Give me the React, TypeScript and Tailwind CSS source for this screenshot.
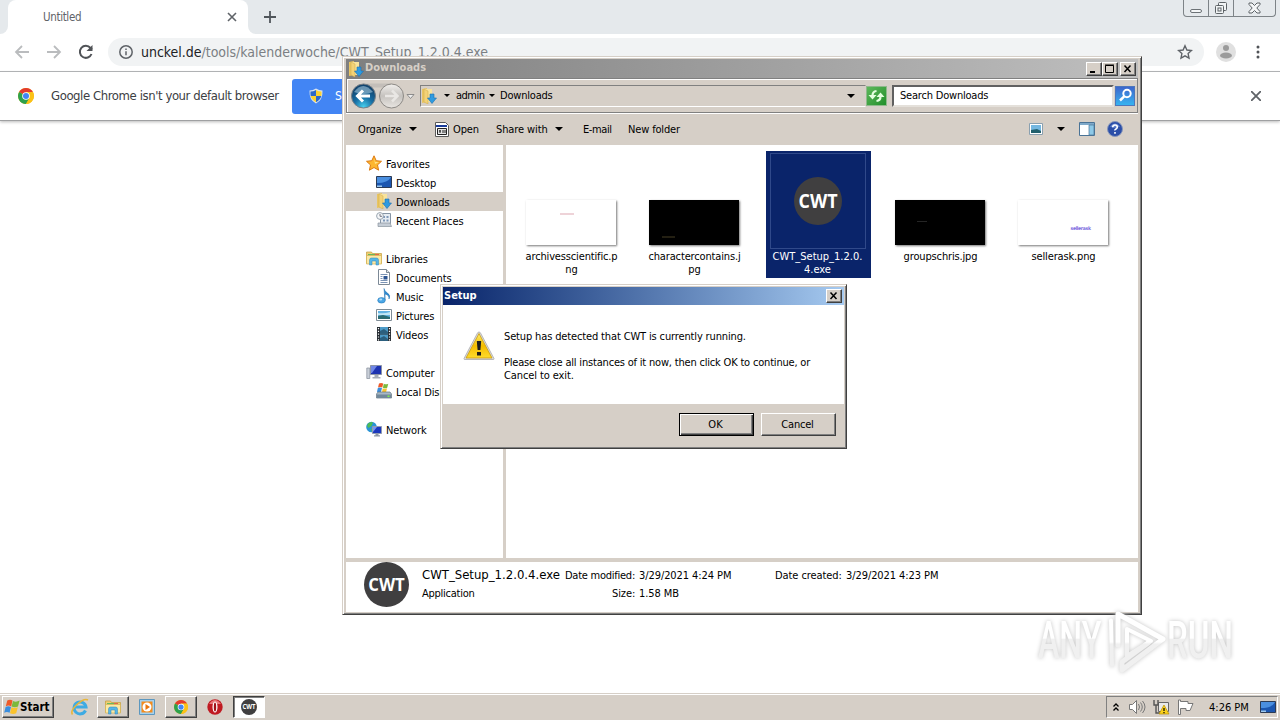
import type { ReactNode } from 'react';

const raised =
  'bg-[#d6cfc7] border border-t-white border-l-white border-r-[#404040] border-b-[#404040] shadow-[inset_-1px_-1px_0_#808080]';

function Caret() {
  return (
    <svg width="8" height="4" viewBox="0 0 8 4" className="shrink-0">
      <path d="M0 0h8L4 4z" fill="#000" />
    </svg>
  );
}

function ChromeLogo({ size = 16 }: { size?: number }) {
  return (
    <svg width={size} height={size} viewBox="0 0 16 16" className="shrink-0">
      <circle cx="8" cy="8" r="8" fill="#fbc116" />
      <path d="M8 8L1.1 4A8 8 0 0 1 14.9 4H8z" fill="#e33b2e" />
      <path d="M8 8L1.1 4A8 8 0 0 0 8 16l3.5-6z" fill="#2da14c" />
      <path d="M8 4.2h7A8 8 0 0 1 8 16l3.4-6z" fill="#fbc116" />
      <circle cx="8" cy="8" r="3.8" fill="#fff" />
      <circle cx="8" cy="8" r="3" fill="#4285f4" />
    </svg>
  );
}

function CwtLogo({ size }: { size: number }) {
  return (
    <svg width={size} height={size} viewBox="0 0 48 48" className="shrink-0">
      <circle cx="24" cy="24" r="24" fill="#403f40" />
      <text
        x="24"
        y="31"
        textAnchor="middle"
        fontFamily="Open Sans, sans-serif"
        fontWeight="700"
        fontSize="19.5"
        textLength="39"
        lengthAdjust="spacingAndGlyphs"
        fill="#fff"
      >
        CWT
      </text>
    </svg>
  );
}

function DownloadsIcon({ size = 16 }: { size?: number }) {
  return (
    <svg width={size} height={size} viewBox="0 0 16 16" className="shrink-0">
      <path d="M1 1l5-1v14l-5 1z" fill="#e9c562" />
      <path d="M3 1h8v13H3z" fill="#f8e39c" />
      <path d="M3 1l4 2v13l-4-2z" fill="#f3d277" stroke="#cfa94a" strokeWidth=".5" />
      <path d="M9 6h4v4h2.500l-4.500 5.500L6.500 10H9z" fill="#2f9be0" stroke="#1b6fb0" strokeWidth=".6" />
    </svg>
  );
}

function MonitorIcon() {
  return (
    <svg width="16" height="16" viewBox="0 0 16 16" className="shrink-0">
      <path d="M.5 2.500h15v11H.5z" fill="#1b56b0" stroke="#2c3b55" />
      <path d="M1 3h14q-3 6-14 6z" fill="#4a8fe0" />
      <path d="M1 11.500h5V13H1z" fill="#9cc8ef" />
    </svg>
  );
}

function FolderIcon({ size = 16 }: { size?: number }) {
  return (
    <svg width={size} height={size} viewBox="0 0 16 16" className="shrink-0">
      <path d="M.5 2h5l1 1.500h9V13H.5z" fill="#efd074" stroke="#c39b3c" strokeWidth=".7" />
      <path d="M2 4h7v1.200H2z" fill="#69b85d" />
      <path d="M9 4h4v1.200H9z" fill="#e4664a" />
      <path d="M.5 5.500h15V14H.5z" fill="#fbe9a6" stroke="#d3b050" strokeWidth=".7" />
      <path d="M3.500 15V10q0-2 2-2h5q2 0 2 2v5h-2.500v-4h-4v4z" fill="#56b5e6" stroke="#2e86bd" strokeWidth=".5" />
    </svg>
  );
}

function PictureIcon() {
  return (
    <svg width="16" height="16" viewBox="0 0 16 16" className="shrink-0">
      <path d="M.5 2.500h15v11H.5z" fill="#fff" stroke="#7e8c96" />
      <path d="M2 4h12v8H2z" fill="#64b4e4" />
      <path d="M2 6q6 1 12-1v3H2z" fill="#c2e7f5" />
      <path d="M2 9l5-1 7 2v2H2z" fill="#2a6c72" />
    </svg>
  );
}

function StarIcon() {
  return (
    <svg width="16" height="16" viewBox="0 0 16 16" className="shrink-0">
      <path d="M8 .8l2.200 4.900 5.300.6-4 3.600 1.100 5.300L8 12.500l-4.600 2.700 1.100-5.300-4-3.600 5.300-.6z" fill="#fdb62f" stroke="#dd7a12" />
      <path d="M8 3l1.200 4H13L9 9z" fill="#ffe289" />
    </svg>
  );
}

function RecentIcon() {
  return (
    <svg width="16" height="16" viewBox="0 0 16 16" className="shrink-0">
      <path d="M4.500 1.500h10v10h-10z" fill="#e7edf3" stroke="#8695a5" />
      <path d="M7 4h2v2H7zM10.500 4h2v2h-2zM7 7.500h2v2H7zM10.500 7.500h2v2h-2z" fill="#7f98b8" />
      <path d="M2 11h12l1.500 3.500H2z" fill="#c5cdd6" stroke="#8a949e" strokeWidth=".7" />
      <circle cx="4" cy="4" r="3.400" fill="#f5f7f9" stroke="#9aa5b0" />
      <path d="M4 2v2.300h2" fill="none" stroke="#556" strokeWidth=".8" />
    </svg>
  );
}

function DocIcon() {
  return (
    <svg width="16" height="16" viewBox="0 0 16 16" className="shrink-0">
      <path d="M2.500.5h8l3 3v12h-11z" fill="#fff" stroke="#7c8996" />
      <path d="M10.500.5v3h3" fill="#dfe6ec" stroke="#7c8996" />
      <path d="M4.500 5.500h7M4.500 7.500h2M4.500 9.500h2M4.500 11.500h7M4.500 13.500h7" stroke="#7a93b5" />
      <path d="M7.500 7h4v3.500h-4z" fill="#2c5592" />
    </svg>
  );
}

function MusicIcon() {
  return (
    <svg width="16" height="16" viewBox="0 0 16 16" className="shrink-0">
      <path d="M8 .5q.5 3 3.500 4.500 3.500 2.500 1.500 6 .5-4-4-5v6z" fill="#2d8bd3" stroke="#1e6eae" strokeWidth=".5" />
      <ellipse cx="5.500" cy="12.300" rx="3.800" ry="2.800" fill="#4aa7e6" stroke="#1e6eae" strokeWidth=".5" />
      <ellipse cx="4.700" cy="11.500" rx="1.500" ry="1" fill="#b5defa" />
    </svg>
  );
}

function VideoIcon() {
  return (
    <svg width="16" height="16" viewBox="0 0 16 16" className="shrink-0">
      <path d="M1 1h14v14H1z" fill="#262d33" />
      <path d="M4 1h8v6.500H4zM4 8.500h8V15H4z" fill="#4d9bc8" />
      <path d="M4 5l4-2 4 3v1.500H4zM4 12l4-2 4 3v2H4z" fill="#2b5f7e" />
      <path d="M2.500 2v13M13.500 2v13" stroke="#fff" strokeWidth="1.200" strokeDasharray="1.200 1.600" />
    </svg>
  );
}

function ComputerIcon() {
  return (
    <svg width="16" height="16" viewBox="0 0 16 16" className="shrink-0">
      <path d="M.8 4h3v10.500h-3z" fill="#c9cfd8" stroke="#848d99" strokeWidth=".7" />
      <path d="M4.500 1.500h11v9h-11z" fill="#1d33b0" stroke="#8b93a6" />
      <path d="M5 2h6L6 9H5z" fill="#6f86e6" />
      <path d="M8.500 11h4v2h2v1.500h-8V13h2z" fill="#a6adb8" />
    </svg>
  );
}

function WinFlag({ size = 16 }: { size?: number }) {
  return (
    <svg width={size} height={size} viewBox="0 0 16 16" className="shrink-0">
      <path d="M3.300 1.500q2.700-1.600 5.200 0L7.200 7.400Q4.500 5.800 1.800 7.300z" fill="#ef5a28" />
      <path d="M9 1.900q2.900 1.600 6.600-.3L14 7.600q-3.200 1.500-6.400 0z" fill="#7cb93c" />
      <path d="M1.600 7.900q2.700-1.500 5.400 0L5.600 13.700q-2.700-1.500-5.400 0z" fill="#3b8ede" />
      <path d="M7.500 8.200q3 1.500 6.300 0l-1.600 6q-3 1.500-6.200 0z" fill="#fbc32c" />
    </svg>
  );
}

function DiskIcon() {
  return (
    <svg width="16" height="16" viewBox="0 0 16 16" className="shrink-0">
      <path d="M3 .5q2-1 4.200 0L6.300 4.500q-2-1-4.300 0z" fill="#ef5a28" />
      <path d="M7.800.8q2 1 4.500 0L11.200 4.800q-2 1-4.300 0z" fill="#7cb93c" />
      <path d="M1.800 5q2-1 4.200 0L5 9H1z" fill="#3b8ede" />
      <path d="M6.700 5.300q2 1 4.300 0L10 9.500H6z" fill="#fbc32c" />
      <path d="M2 9h12l1.500 2v4H.5v-4z" fill="#a8b8c4" stroke="#63727e" strokeWidth=".7" />
      <path d="M1 11.500h14V15H1z" fill="#71889a" />
      <path d="M11.500 12.500h2v1.500h-2z" fill="#7cf04c" />
    </svg>
  );
}

function NetworkIcon() {
  return (
    <svg width="16" height="16" viewBox="0 0 16 16" className="shrink-0">
      <circle cx="5.500" cy="6" r="5.300" fill="#2a94d6" />
      <path d="M2 2.500Q5 0 7 1.500L5.500 5 2.500 7 1 5zM5 8l3-1 1 3-3 1z" fill="#4dbb55" />
      <path d="M6.500 5.500h9v7h-9z" fill="#1b37bd" stroke="#909bb0" />
      <path d="M7 6h4l-4 5z" fill="#7895ef" />
      <path d="M9.500 13h3v1.200h1.500V15.500H8v-1.300h1.500z" fill="#8d97a5" />
    </svg>
  );
}

function Shield() {
  return (
    <svg width="14" height="16" viewBox="0 0 14 16" className="shrink-0">
      <path d="M7 .5q3 2 6.500 2Q14 12 7 15.500 0 12 .5 2.500 4 2.500 7 .5z" fill="#d9e4ef" />
      <path d="M7 2v6H1.700Q1.300 6 1.500 3.600 4.500 3.500 7 2z" fill="#2c68c9" />
      <path d="M7 2v6h5.300q.4-2 .2-4.400Q9.500 3.500 7 2z" fill="#fbd232" />
      <path d="M7 8v6.300Q2.700 12 1.700 8z" fill="#fbd232" />
      <path d="M7 8v6.300Q11.300 12 12.300 8z" fill="#2c68c9" />
    </svg>
  );
}

function CaptionButton({ children, label }: { children: ReactNode; label: string }) {
  return (
    <button aria-label={label} className={`flex h-[14px] w-4 items-center justify-center ${raised}`}>
      <svg width="10" height="10" viewBox="0 0 10 10" fill="none" stroke="#000">
        {children}
      </svg>
    </button>
  );
}

function Browser() {
  return (
    <div className="flex h-[693px] flex-col">
      <div className="flex h-[34px] shrink-0 bg-[#e5e9ec]">
        <div className="flex w-2 items-end bg-white">
          <div className="h-[34px] w-2 rounded-br-lg bg-[#e5e9ec]" />
        </div>
        <div className="flex w-[240px] items-center bg-[#e5e9ec]">
          <div className="flex h-full w-full items-center rounded-t-lg bg-white pr-[11px] pl-[35px]">
            <span className="flex-1 pt-[2px] text-[11.500px] tracking-[-0.350px] text-[#5f6368]">Untitled</span>
            <svg width="10" height="10" viewBox="0 0 10 10" stroke="#5f6368" strokeWidth="1.600">
              <path d="M1 1l8 8M9 1L1 9" />
            </svg>
          </div>
        </div>
        <div className="flex flex-1 bg-white">
          <div className="flex flex-1 items-center rounded-bl-lg bg-[#e5e9ec] pl-4">
            <svg width="12" height="12" viewBox="0 0 12 12" stroke="#50565b" strokeWidth="1.800">
              <path d="M6 0v12M0 6h12" />
            </svg>
          </div>
        </div>
        <div className="mr-1 flex h-[17px] w-[93px] rounded-b-[4px] border border-t-0 border-[#7d8387]">
          <div className="flex w-[25px] items-end justify-center border-r border-[#7d8387] pb-[3px]">
            <div className="h-1 w-3 rounded-[2px] border border-[#6c7276] bg-[#f4f6f7]" />
          </div>
          <div className="flex w-[25px] items-center justify-center border-r border-[#7d8387]">
            <svg width="14" height="14" viewBox="0 0 14 14" fill="#f1f4f5" stroke="#5c6266">
              <rect x="4.500" y="1.500" width="8" height="8" rx="1" />
              <rect x="1.500" y="4.500" width="8" height="8" rx="1" />
              <rect x="4" y="7" width="3" height="3" />
            </svg>
          </div>
          <div className="flex flex-1 items-center justify-center">
            <svg width="13" height="12" viewBox="0 0 13 12" fill="#f4f6f7" stroke="#5c6266">
              <path d="M1 1h3l2.500 2.500L9 1h3v1.500L8.800 6 12 9.500V11H9L6.500 8.500 4 11H1V9.500L4.200 6 1 2.500z" />
            </svg>
          </div>
        </div>
      </div>

      <div className="flex h-[38px] shrink-0 items-center border-b border-[#aeb0b3] bg-white">
        <div className="flex w-[108px] items-center pb-px pl-[14px]">
          <svg width="16" height="14" viewBox="0 0 16 14" fill="none" stroke="#babcbe" strokeWidth="1.800">
            <path d="M15 7H2M8 1L2 7l6 6" />
          </svg>
          <svg width="16" height="14" viewBox="0 0 16 14" fill="none" stroke="#babcbe" strokeWidth="1.800" className="ml-4">
            <path d="M1 7h13M8 1l6 6-6 6" />
          </svg>
          <svg width="16" height="16" viewBox="0 0 16 16" fill="none" stroke="#505357" strokeWidth="2" className="ml-4">
            <path d="M13.500 10A6 6 0 1 1 12.500 4L14 5.500" />
            <path d="M14.500 1v6h-6z" fill="#505357" stroke="none" />
          </svg>
        </div>
        <div className="mb-px flex h-7 w-[1096px] items-center rounded-full bg-[#f1f3f4] pr-[11px] pl-[11px]">
          <svg width="14" height="14" viewBox="0 0 14 14" fill="none" stroke="#5f6368" strokeWidth="1.500">
            <circle cx="7" cy="7" r="6.200" />
            <path d="M7 6.300v4M7 3.500v1.500" />
          </svg>
          <span className="ml-2 flex-1 pt-px text-[14px] tracking-[-0.020px] text-[#7b7f83]">
            <span className="text-[#202124]">unckel.de</span>/tools/kalenderwoche/CWT_Setup_1.2.0.4.exe
          </span>
          <svg width="16" height="16" viewBox="0 0 16 16" fill="none" stroke="#5f6368" strokeWidth="1.400">
            <path d="M8 1.800l1.900 4.200 4.600.5-3.400 3.100.9 4.500L8 11.800l-4 2.300.9-4.500L1.500 6.500 6.100 6z" />
          </svg>
        </div>
        <svg width="20" height="20" viewBox="0 0 20 20" className="mb-[2px] ml-3">
          <circle cx="10" cy="10" r="10" fill="#e0e0e0" />
          <circle cx="10" cy="6" r="3" fill="#9b9b9b" />
          <ellipse cx="10" cy="13.500" rx="6" ry="3" fill="#9b9b9b" />
        </svg>
        <svg width="4" height="14" viewBox="0 0 4 14" fill="#505357" className="mb-px ml-5">
          <circle cx="2" cy="2" r="1.500" />
          <circle cx="2" cy="7" r="1.500" />
          <circle cx="2" cy="12" r="1.500" />
        </svg>
      </div>

      <div className="flex h-[49px] shrink-0 items-center border-b border-[#9fa0a2] bg-white pr-[19px] pl-[18px] shadow-[0_1px_3px_#bbb]">
        <ChromeLogo />
        <span className="ml-[17px] w-[241px] text-[13px] tracking-[-0.420px] whitespace-nowrap text-[#3c4043]">
          Google Chrome isn't your default browser
        </span>
        <button className="flex h-[35px] w-[120px] items-center rounded-[3px] bg-[#4285f4] pl-[17px] text-left text-[12px] text-white">
          <Shield />
          <span className="ml-[12px]">Set as default</span>
        </button>
        <svg width="10" height="10" viewBox="0 0 10 10" stroke="#5f6368" strokeWidth="1.800" className="ml-auto">
          <path d="M0 0l10 10M10 0L0 10" />
        </svg>
      </div>
    </div>
  );
}

const tree = [
  { label: 'Favorites', icon: <StarIcon /> },
  { label: 'Desktop', icon: <MonitorIcon />, child: true },
  { label: 'Downloads', icon: <DownloadsIcon />, child: true, active: true },
  { label: 'Recent Places', icon: <RecentIcon />, child: true },
  null,
  { label: 'Libraries', icon: <FolderIcon /> },
  { label: 'Documents', icon: <DocIcon />, child: true },
  { label: 'Music', icon: <MusicIcon />, child: true },
  { label: 'Pictures', icon: <PictureIcon />, child: true },
  { label: 'Videos', icon: <VideoIcon />, child: true },
  null,
  { label: 'Computer', icon: <ComputerIcon /> },
  { label: 'Local Disk (C:)', icon: <DiskIcon />, child: true },
  null,
  { label: 'Network', icon: <NetworkIcon /> },
];

const files = [
  { lines: ['archivesscientific.p', 'ng'], kind: 'light' },
  { lines: ['charactercontains.j', 'pg'], kind: 'dark' },
  { lines: ['CWT_Setup_1.2.0.', '4.exe'], kind: 'exe' },
  { lines: ['groupschris.jpg'], kind: 'dark2' },
  { lines: ['sellerask.png'], kind: 'seller' },
];

function Thumb({ kind }: { kind: string }) {
  if (kind === 'exe') {
    return (
      <div className="flex h-24 w-24 items-center justify-center border border-[#30498a]">
        <CwtLogo size={48} />
      </div>
    );
  }
  const dark = kind.startsWith('dark');
  return (
    <div className="flex h-24 items-end pr-[2px] pb-1">
      <div className={`h-[45px] w-[90px] shadow-[1px_1px_2px_#777] ${dark ? 'bg-black' : 'bg-white'}`}>
        {kind === 'light' && <div className="mt-[13px] ml-[34px] h-[2px] w-[14px] bg-[#eed3d8]" />}
        {kind === 'dark' && <div className="mt-[36px] ml-[13px] h-[2px] w-[13px] bg-[#231f12]" />}
        {kind === 'dark2' && <div className="mt-[21px] ml-[22px] h-px w-[10px] bg-[#252525]" />}
        {kind === 'seller' && (
          <div className="pt-[24px] pl-[53px] text-[5px] leading-[8px] font-bold tracking-[-0.300px] text-[#7a6be0]">
            sellerask
          </div>
        )}
      </div>
    </div>
  );
}

function Explorer() {
  return (
    <div className="absolute top-[56px] left-[342px] flex h-[559px] w-[800px] flex-col border border-t-[#d6cfc7] border-r-[#404040] border-b-[#404040] border-l-[#d6cfc7] bg-[#d6cfc7] px-[3px] py-[2px] shadow-[inset_1px_1px_0_#fff,inset_-1px_-1px_0_#808080]">
      <div className="flex h-[19px] shrink-0 items-center bg-linear-to-r from-[#7f7f7f] to-[#bfbfbf] pr-[2px] pl-[2px]">
        <DownloadsIcon />
        <span className="ml-[1px] flex-1 text-[11px] font-bold text-[#d6cfc7]">Downloads</span>
        <CaptionButton label="Minimize">
          <path d="M1 8h5" strokeWidth="2" />
        </CaptionButton>
        <CaptionButton label="Maximize">
          <path d="M.5 1.500h8v7h-8zM0 1h9" />
        </CaptionButton>
        <div className="ml-[2px] flex">
          <CaptionButton label="Close">
            <path d="M1.500 1.500l6 6.500M7.500 1.500l-6 6.500" strokeWidth="1.500" />
          </CaptionButton>
        </div>
      </div>

      <div className="flex h-[35px] shrink-0 items-center border border-[#808080] pl-[4px] shadow-[inset_1px_1px_0_#fff,0_1px_0_#fff]">
        <svg width="64" height="28" viewBox="0 0 64 28" className="shrink-0">
          <defs>
            <radialGradient id="nav" cx=".5" cy=".95" r=".8">
              <stop offset="0" stopColor="#48d0ee" />
              <stop offset=".5" stopColor="#176fa5" />
              <stop offset="1" stopColor="#12456f" />
            </radialGradient>
            <linearGradient id="fwd" x2="0" y2="1">
              <stop offset="0" stopColor="#f2f0ed" />
              <stop offset=".5" stopColor="#c5c2be" />
              <stop offset="1" stopColor="#e9e6e2" />
            </linearGradient>
          </defs>
          <path d="M12 1.500h28v4H12z" fill="#c3beb9" />
          <circle cx="12.500" cy="14" r="12" fill="url(#nav)" stroke="#777f86" />
          <path d="M3 10q9-12 19 0-9 4-19 0z" fill="#8fb6cf" opacity=".7" />
          <path d="M19 14H7M12 8.500L6.500 14l5.500 5.500" fill="none" stroke="#fff" strokeWidth="3" />
          <circle cx="40.500" cy="14" r="12" fill="url(#fwd)" stroke="#8c8985" />
          <path d="M34 14h12M41 8.500l5.500 5.500-5.500 5.500" fill="none" stroke="#e9e7e4" strokeWidth="2.500" />
          <path d="M56 12.500h7l-3.500 4z" fill="#eee" stroke="#777" strokeWidth=".8" />
        </svg>
        <div className="ml-[5px] flex h-[22px] w-[446px] shrink-0 items-center border border-[#808080] border-r-transparent border-b-white text-[11px]">
          <DownloadsIcon />
          <div className="ml-[7px] flex w-[12px]">
            <svg width="6" height="3" viewBox="0 0 6 3">
              <path d="M0 0h6L3 3z" />
            </svg>
          </div>
          <span className="w-[33px] pt-px tracking-[-0.500px]">admin</span>
          <div className="flex w-[11px]">
            <svg width="6" height="3" viewBox="0 0 6 3">
              <path d="M0 0h6L3 3z" />
            </svg>
          </div>
          <span className="flex-1 pt-px tracking-[-0.200px]">Downloads</span>
          <div className="mr-[10px]">
            <Caret />
          </div>
        </div>
        <div className="flex h-5 w-[21px] shrink-0 items-center justify-center border border-[#8fb98c] bg-linear-to-br from-[#5cb85a] to-[#1f8f2b]">
          <svg width="19" height="16" viewBox="0 0 19 16" fill="none" stroke="#e5ffe0" strokeWidth="2.200">
            <path d="M5.500 7.500Q5.500 3.500 9.500 3M13.500 8.500q0 4-4 4.500" />
            <path d="M1.500 7h8l-4 4.500zM9.500 9h8l-4-4.500z" fill="#e5ffe0" stroke="none" />
          </svg>
        </div>
        <div className="ml-[5px] flex h-[22px] w-[222px] shrink-0 items-center border-2 border-t-[#606060] border-r-[#e4e0da] border-b-[#e4e0da] border-l-[#606060] bg-white pl-[6px] text-[11px] tracking-[-0.200px]">
          <span className="pt-[2px]">Search Downloads</span>
        </div>
        <div className="ml-[1px] flex h-5 w-5 shrink-0 items-center justify-center border border-[#4d77bb] bg-linear-to-b from-[#3c66cc] to-[#35b3f0]">
          <svg width="15" height="15" viewBox="0 0 15 15" fill="none" stroke="#fff" strokeWidth="2">
            <circle cx="9" cy="5.500" r="3.700" />
            <path d="M6.200 8.300L2 12.500" strokeWidth="2.500" />
          </svg>
        </div>
      </div>

      <div className="flex h-[32px] shrink-0 items-center pl-[12px] text-[11px] tracking-[-0.100px] whitespace-nowrap">
        <span className="w-[51px] pt-[2px]">Organize</span>
        <div className="flex w-[26px]">
          <Caret />
        </div>
        <svg width="14" height="15" viewBox="0 0 14 15" className="mr-[4px]">
          <path d="M.5.5h10l3 3v11H.5z" fill="#fff" stroke="#5a5a5a" />
          <path d="M1 3h11v2H1z" fill="#1b3d9c" />
          <path d="M2.500 6.500h9v6h-9z" fill="#e3e3e3" stroke="#222" />
          <path d="M4 9h2M5 8v3M8 8v3M10 8v3" stroke="#222" />
        </svg>
        <span className="w-[43px] pt-[2px]">Open</span>
        <span className="w-[59px] pt-[2px]">Share with</span>
        <div className="flex w-[28px]">
          <Caret />
        </div>
        <span className="w-[45px] pt-[2px] tracking-[-0.400px]">E-mail</span>
        <span className="flex-1 pt-[2px] tracking-[-0.150px]">New folder</span>
        <svg width="14" height="12" viewBox="0 0 14 12">
          <path d="M.5.5h13v11H.5z" fill="#fff" stroke="#8aa0b0" />
          <path d="M2 2h10v8H2z" fill="#74b7e0" />
          <path d="M2 7l6-1 4 2v2H2z" fill="#22606d" />
        </svg>
        <div className="ml-[14px] flex w-[22px]">
          <Caret />
        </div>
        <svg width="16" height="14" viewBox="0 0 16 14">
          <path d="M.5.5h15v13H.5z" fill="#fff" stroke="#4a7396" />
          <path d="M1 1h14v2H1z" fill="#7fa9c9" />
          <path d="M10 3h5v10h-5z" fill="#8dc9e8" stroke="#4a7396" strokeWidth=".7" />
        </svg>
        <svg width="16" height="16" viewBox="0 0 16 16" className="mr-[15px] ml-[12px]">
          <circle cx="8" cy="8" r="7.500" fill="#2b4ea8" stroke="#8797bb" />
          <path d="M3 5.500q5-6 10 0-5 2.500-10 0z" fill="#7f9ce0" opacity=".7" />
          <path d="M5.700 6.300Q5.800 4 8 4t2.300 2q0 1.300-1.300 1.900T8 9.500M8 11v1.700" fill="none" stroke="#fff" strokeWidth="1.600" />
        </svg>
      </div>

      <div className="flex h-[413px] shrink-0 bg-white text-[11px]">
        <div className="w-[157px] overflow-hidden pt-[9px]">
          {tree.map((item, i) =>
            item ? (
              <div
                key={item.label}
                className={`flex h-[19px] items-center gap-1 tracking-[-0.100px] whitespace-nowrap ${
                  item.child ? 'pl-[30px]' : 'pl-5'
                } ${item.active ? 'bg-[#d6cfc7]' : ''}`}
              >
                <div className="pb-px">{item.icon}</div>
                <span className="pt-[3px]">{item.label}</span>
              </div>
            ) : (
              <div key={i} className="h-[19px]" />
            ),
          )}
        </div>
        <div className="w-[3px] bg-[#d6cfc7]" />
        <div className="flex flex-1 gap-[18px] pt-[6px] pl-[14px]">
          {files.map((file) => (
            <div
              key={file.lines[0]}
              className={`flex h-[127px] w-[105px] shrink-0 flex-col items-center pt-[2px] pr-[2px] leading-[13px] ${
                file.kind === 'exe' ? 'bg-[#0a246a] text-white' : 'tracking-[-0.150px]'
              }`}
            >
              <Thumb kind={file.kind} />
              <div className="flex flex-col items-center pt-px whitespace-nowrap">
                {file.lines.map((line) => (
                  <span key={line}>{line}</span>
                ))}
              </div>
            </div>
          ))}
        </div>
      </div>

      <div className="h-1 shrink-0 bg-[#d6cfc7]" />
      <div className="flex flex-1 bg-white pl-[18px] text-[11px] whitespace-nowrap">
        <CwtLogo size={45} />
        <div className="ml-[13px] w-[143px] pt-1">
          <div className="h-[18px] text-[13px] leading-[18px]">CWT_Setup_1.2.0.4.exe</div>
          <div className="h-[18px] pt-px leading-[18px] tracking-[-0.250px]">Application</div>
        </div>
        <div className="grid h-[36px] grid-cols-[70px_131px_66px_100px] gap-x-1 pt-[5px] leading-[18px] tracking-[-0.080px]">
          <span className="tracking-[-0.250px]">Date modified:</span>
          <span>3/29/2021 4:24 PM</span>
          <span className="pl-px">Date created:</span>
          <span className="pl-[2px]">3/29/2021 4:23 PM</span>
          <span className="pl-[47px]">Size:</span>
          <span>1.58 MB</span>
        </div>
      </div>
    </div>
  );
}

function SetupDialog() {
  return (
    <div className="absolute top-[284px] left-[440px] flex h-[165px] w-[407px] flex-col border border-t-[#d6cfc7] border-r-[#404040] border-b-[#404040] border-l-[#d6cfc7] bg-[#d6cfc7] p-[2px] text-[11px] shadow-[inset_1px_1px_0_#fff,inset_-1px_-1px_0_#808080]">
      <div className="flex h-[18px] shrink-0 items-center bg-linear-to-r from-[#0a246a] to-[#a6caf0] pr-[2px] pl-px">
        <span className="flex-1 pt-px font-bold text-white">Setup</span>
        <CaptionButton label="Close">
          <path d="M1.500 1.500l6 6.500M7.500 1.500l-6 6.500" strokeWidth="1.500" />
        </CaptionButton>
      </div>
      <div className="flex h-[99px] shrink-0 bg-white pt-[25px] pl-[20px]">
        <svg width="32" height="32" viewBox="0 0 32 32">
          <defs>
            <linearGradient id="warn" x2="0" y2="1">
              <stop offset="0" stopColor="#fff06a" />
              <stop offset=".5" stopColor="#f5bd00" />
              <stop offset="1" stopColor="#fddb2c" />
            </linearGradient>
          </defs>
          <path d="M16 2q1 0 1.500 1L31 28.500q.3 1-1 1H2q-1.300 0-1-1L14.500 3Q15 2 16 2z" fill="#dcdcdc" stroke="#a9a9a9" strokeWidth=".8" />
          <path d="M16 3.500L29 28H3z" fill="url(#warn)" stroke="#c99a10" strokeWidth=".8" />
          <path d="M13.800 11h4.400l-.8 9h-2.800zM14 22h4v3.500h-4z" fill="#1d1d1d" />
        </svg>
        <div className="ml-[9px] leading-[13px] whitespace-nowrap">
          <p className="tracking-[-0.140px]">Setup has detected that CWT is currently running.</p>
          <p className="mt-[13px] tracking-[-0.190px]">
            Please close all instances of it now, then click OK to continue, or
          </p>
          <p className="tracking-[-0.100px]">Cancel to exit.</p>
        </div>
      </div>
      <div className="flex flex-1 justify-end gap-[7px] pt-[9px] pr-[8px]">
        <button className="h-[23px] w-[75px] border border-black bg-[#d6cfc7] pt-px pr-[2px] shadow-[inset_1px_1px_0_#fff,inset_-1px_-1px_0_#404040,inset_-2px_-2px_0_#808080]">
          OK
        </button>
        <button className={`h-[23px] w-[75px] pt-px pr-[2px] tracking-[-0.200px] ${raised}`}>Cancel</button>
      </div>
    </div>
  );
}

function Watermark() {
  return (
    <svg
      width="240"
      height="76"
      viewBox="0 0 240 76"
      className="absolute top-[605px] left-[1030px] overflow-visible drop-shadow-[0_0_2px_#c4c4c4]"
      fontFamily="Roboto, sans-serif"
      fontWeight="500"
      fontSize="51"
      fill="url(#mark)"
    >
      <defs>
        <linearGradient id="mark" gradientUnits="userSpaceOnUse" x1="0" y1="10" x2="0" y2="66">
          <stop offset=".48" stopColor="#fff" />
          <stop offset=".52" stopColor="#f0f0f0" />
        </linearGradient>
        <linearGradient id="markText" gradientUnits="userSpaceOnUse" x1="0" y1="-37" x2="0" y2="0">
          <stop offset=".46" stopColor="#fff" />
          <stop offset=".5" stopColor="#f0f0f0" />
        </linearGradient>
      </defs>
      <g transform="translate(8 53) scale(.63 1)" fill="url(#markText)">
        <text>ANY</text>
      </g>
      <g transform="translate(137 53) scale(.65 1)" fill="url(#markText)">
        <text>RUN</text>
      </g>
      <g fill="none" stroke="url(#mark)" strokeLinejoin="round" strokeLinecap="round">
        <path d="M88 40V9l45 25-41 31v-8l26-19" strokeWidth="5" />
        <path d="M81 15.500L82 60" strokeWidth="4" />
        <path d="M97 24l24 12-24 15z" strokeWidth="4" />
      </g>
    </svg>
  );
}

function Taskbar() {
  return (
    <div className="flex h-[27px] items-center border-t border-[#d6cfc7] bg-[#d6cfc7] text-[11px] shadow-[inset_0_1px_0_#fff]">
      <button className={`ml-[2px] flex h-[22px] w-[52px] items-center pl-px ${raised}`}>
        <WinFlag />
        <span className="pt-[2px] text-[11.500px] font-bold">Start</span>
      </button>
      <div className="ml-[17px] flex items-center">
        <svg width="18" height="18" viewBox="0 0 18 18" fill="none">
          <path d="M14.500 12.500A6 6 0 1 1 15 9H4" stroke="#3eabe3" strokeWidth="3" />
          <path d="M1.500 16.500Q-1 13 6 6.500T17 2" stroke="#e8b63a" strokeWidth="1.600" />
        </svg>
      </div>
      <button className={`ml-2 flex h-[22px] w-[32px] items-center justify-center ${raised}`}>
        <FolderIcon />
      </button>
      <svg width="16" height="16" viewBox="0 0 16 16" className="ml-[10px]">
        <path d="M.5.5h15v15H.5z" fill="#a5d1ee" stroke="#5c97bf" />
        <path d="M2.500 2.500h11v11h-11z" fill="#f38b1d" />
        <circle cx="8" cy="8" r="4.500" fill="#fff" />
        <path d="M6.500 5v6l4.500-3z" fill="#e9750d" />
      </svg>
      <button className={`ml-[10px] flex h-[22px] w-[32px] items-center justify-center ${raised}`}>
        <ChromeLogo size={14} />
      </button>
      <svg width="16" height="16" viewBox="0 0 16 16" className="ml-[10px]">
        <circle cx="8" cy="8" r="7.700" fill="#c01a22" />
        <path d="M2 5q6-8 12 0z" fill="#e8777a" />
        <ellipse cx="8" cy="8" rx="2.500" ry="5.500" fill="#fff" />
        <ellipse cx="8" cy="8" rx="1.200" ry="4.500" fill="#a01018" />
      </svg>
      <button className="ml-[10px] flex h-[22px] w-[32px] items-center justify-center border border-t-[#404040] border-r-white border-b-white border-l-[#404040] bg-white shadow-[inset_1px_1px_0_#808080]">
        <CwtLogo size={16} />
      </button>

      <div className="mr-[2px] ml-auto flex h-[22px] w-[172px] items-center border border-t-[#808080] border-r-white border-b-white border-l-[#808080] pl-[6px]">
        <svg width="6" height="9" viewBox="0 0 6 9" fill="none" stroke="#000" strokeWidth="1.300">
          <path d="M.5 3.500L3 1l2.500 2.500M.5 7.500L3 5l2.500 2.500" />
        </svg>
        <svg width="17" height="16" viewBox="0 0 17 16" fill="none" stroke="#777" className="ml-[10px]">
          <path d="M.5 5.500h3l4-4v13l-4-4h-3z" fill="#fff" />
          <path d="M9.500 5q2 3 0 6M11.500 3.500q3.500 4.500 0 9M13.500 2q5 6 0 12" />
        </svg>
        <svg width="17" height="16" viewBox="0 0 17 16" className="ml-[7px]">
          <path d="M5.500 3.500h10v9h-10z" fill="#e9e9e9" stroke="#666" />
          <path d="M1 1v5h4V1M3 6v8h4" fill="none" stroke="#555" strokeWidth="1.400" />
          <path d="M11 6l5 9H6z" fill="#fbd21b" stroke="#b98e00" strokeWidth=".7" />
          <path d="M11 9v3M11 13v1.200" stroke="#000" strokeWidth="1.200" />
        </svg>
        <svg width="17" height="16" viewBox="0 0 17 16" fill="#fff" stroke="#777" className="ml-[7px]">
          <path d="M1.500 1v14.500h2V9.500H9v2h4l3-7h-5v-2H3.500V1z" />
        </svg>
        <span className="ml-[15px] w-[51px] pt-[2px] whitespace-nowrap">4:26 PM</span>
        <MonitorIcon />
      </div>
    </div>
  );
}

export default function App() {
  return (
    <div className="relative h-[720px] w-[1280px] overflow-hidden bg-white font-['DejaVu_Sans_Condensed','DejaVu_Sans',sans-serif] text-black">
      <Browser />
      <Taskbar />
      <Explorer />
      <SetupDialog />
      <Watermark />
    </div>
  );
}
